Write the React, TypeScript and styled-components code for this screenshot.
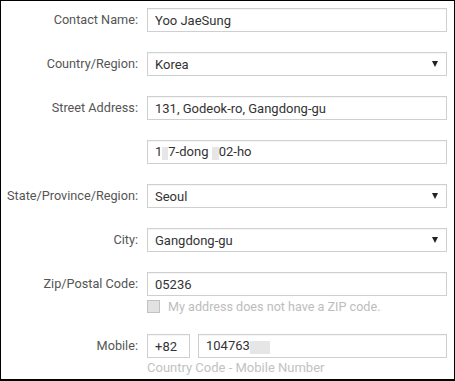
import styled, {createGlobalStyle} from 'styled-components'

const Global = createGlobalStyle`
    html, body {
        margin: 0;
        padding: 0;
        background: #fff;
    }
    body {
        font-family: Roboto, "Open Sans", "Liberation Sans", sans-serif;
    }
`

const Frame = styled.div`
    box-sizing: border-box;
    width: 455px;
    height: 381px;
    border: 1px solid #000;
    border-bottom-width: 2px;
    padding: 7px 0 0 0;
    display: flex;
    flex-direction: column;
    gap: 20px;
    overflow: hidden;
`

const Row = styled.div`
    flex: none;
    display: grid;
    grid-template-columns: 137px 300px;
    column-gap: 9px;
    align-items: start;
`

const Label = styled.label`
    text-align: right;
    font-size: 12.7px;
    line-height: 24px;
    color: #555;
    white-space: nowrap;
`

const Field = styled.div`
    display: flex;
    flex-direction: column;
`

// $w fixes the width (country code box), $grow fills the rest of a Pair
const Box = styled.div<{$w?: number; $grow?: boolean}>`
    box-sizing: border-box;
    height: 24px;
    flex: ${p => p.$grow ? '1 1 auto' : 'none'};
    ${p => p.$w ? `width: ${p.$w}px;` : ''}
    border: 1px solid #cfcfcf;
    box-shadow: inset 0 1px 1px rgba(0, 0, 0, 0.04);
    padding: 0 7px;
    display: flex;
    align-items: center;
    justify-content: space-between;
    font-size: 13px;
    color: #333;
    white-space: nowrap;
`

const Arrow = styled.span`
    width: 0;
    height: 0;
    border-left: 3.5px solid transparent;
    border-right: 3.5px solid transparent;
    border-top: 6px solid #222;
    margin-right: 1px;
`

const Pair = styled.div`
    display: flex;
    gap: 8px;
`

const Smudge = styled.span<{$w: number}>`
    display: inline-block;
    width: ${p => p.$w}px;
    height: 13px;
    background: #e6e6e6;
    vertical-align: middle;
`

const CheckLine = styled.div`
    flex: none;
    display: flex;
    align-items: center;
    gap: 8px;
    margin-top: 3px;
    font-size: 12.6px;
    line-height: 15px;
    color: #bdbdbd;
    height: 15px;
    margin-bottom: 0;
`

const Check = styled.span`
    box-sizing: border-box;
    width: 13px;
    height: 13px;
    border: 1px solid #c2c2c2;
    background: #e2e2e2;
`

const Hint = styled.div`
    margin-top: 2px;
    font-size: 13px;
    line-height: 15px;
    color: #c2c2c2;
    white-space: nowrap;
`

const App = () => (
    <>
        <Global/>
        <Frame>
            <Row>
                <Label>Contact Name:</Label>
                <Box>Yoo JaeSung</Box>
            </Row>
            <Row>
                <Label>Country/Region:</Label>
                <Box>Korea<Arrow/></Box>
            </Row>
            <Row>
                <Label>Street Address:</Label>
                <Box>131, Godeok-ro, Gangdong-gu</Box>
            </Row>
            <Row>
                <span/>
                <Box><span>1<Smudge $w={6}/>7-dong <Smudge $w={7}/>02-ho</span></Box>
            </Row>
            <Row>
                <Label>State/Province/Region:</Label>
                <Box>Seoul<Arrow/></Box>
            </Row>
            <Row>
                <Label>City:</Label>
                <Box>Gangdong-gu<Arrow/></Box>
            </Row>
            <Row>
                <Label>Zip/Postal Code:</Label>
                <Field>
                    <Box>05236</Box>
                    <CheckLine><Check/>My address does not have a ZIP code.</CheckLine>
                </Field>
            </Row>
            <Row>
                <Label>Mobile:</Label>
                <Field>
                    <Pair>
                        <Box $w={43}>+82</Box>
                        <Box $grow><span>104763<Smudge $w={20}/></span></Box>
                    </Pair>
                    <Hint>Country Code - Mobile Number</Hint>
                </Field>
            </Row>
        </Frame>
    </>
)

export default App
